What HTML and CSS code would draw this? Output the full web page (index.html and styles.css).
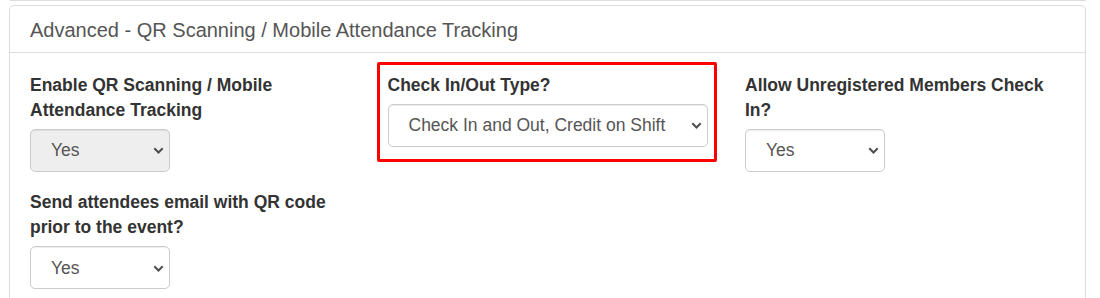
FILE: index.html
```html
<!DOCTYPE html>
<html lang="en">
<head>
  <meta charset="UTF-8" />
  <meta name="viewport" content="width=device-width, initial-scale=1.0"/>
  <title>Event Settings - Advanced</title>
  <link rel="stylesheet" href="styles.css">
</head>
<body>
  <div class="panel-group">
    <!-- bottom edge of the panel above -->
    <div class="panel-stub"></div>

    <div class="panel">
      <div class="panel-heading">
        <h4 class="panel-title">Advanced - QR Scanning / Mobile Attendance Tracking</h4>
      </div>
      <div class="panel-body">
        <div class="form-grid">
          <div class="form-group">
            <label for="qr-enabled">Enable QR Scanning / Mobile Attendance Tracking</label>
            <div class="select-wrap select-short">
              <select id="qr-enabled" class="form-control" disabled>
                <option>Yes</option>
                <option>No</option>
              </select>
              <svg class="caret" width="11" height="7" viewBox="0 0 11 7"><path d="M1.3 1.3l4.2 4.2 4.2-4.2"/></svg>
            </div>
          </div>

          <div class="form-group highlighted">
            <label for="check-type">Check In/Out Type?</label>
            <div class="select-wrap">
              <select id="check-type" class="form-control">
                <option>Check In and Out, Credit on Shift</option>
                <option>Check In Only</option>
              </select>
              <svg class="caret" width="11" height="7" viewBox="0 0 11 7"><path d="M1.3 1.3l4.2 4.2 4.2-4.2"/></svg>
            </div>
            <!-- annotation box -->
            <div class="callout"></div>
          </div>

          <div class="form-group">
            <label for="allow-unreg">Allow Unregistered Members Check In?</label>
            <div class="select-wrap select-short">
              <select id="allow-unreg" class="form-control">
                <option>Yes</option>
                <option>No</option>
              </select>
              <svg class="caret" width="11" height="7" viewBox="0 0 11 7"><path d="M1.3 1.3l4.2 4.2 4.2-4.2"/></svg>
            </div>
          </div>

          <div class="form-group">
            <label for="send-email">Send attendees email with QR code prior to the event?</label>
            <div class="select-wrap select-short">
              <select id="send-email" class="form-control">
                <option>Yes</option>
                <option>No</option>
              </select>
              <svg class="caret" width="11" height="7" viewBox="0 0 11 7"><path d="M1.3 1.3l4.2 4.2 4.2-4.2"/></svg>
            </div>
          </div>
        </div>
      </div>
    </div>
  </div>
</body>
</html>
```

FILE: styles.css
```css
/* Base */
body {
  font-family: "Liberation Sans", Arial, sans-serif;
  margin: 0;
  background-color: #fff;
  color: #333;
  overflow: hidden;
}
.panel-group {
  padding: 0 14px 0 9px;
}

/* Panels */
.panel-stub {
  height: 1px;
  border: 1px solid #ddd;
  border-top: none;
  border-radius: 0 0 5px 5px;
  margin-top: -1px;
}
.panel {
  margin-top: 4px;
  border: 1px solid #ddd;
  border-radius: 5px;
  background-color: #fff;
}
.panel-heading {
  padding: 13px 20px 11px;
  border-bottom: 1px solid #ddd;
}
.panel-title {
  margin: 0;
  font-size: 20px;
  font-weight: normal;
  line-height: 22px;
  color: #555;
}
.panel-body {
  padding: 20px;
}

/* Form layout */
.form-grid {
  display: grid;
  grid-template-columns: repeat(3, 1fr);
  column-gap: 37.5px;
  row-gap: 18.75px;
  align-items: start;
}
.form-group {
  display: flex;
  flex-direction: column;
  align-items: flex-start;
}
.form-group label {
  font-size: 17.5px;
  font-weight: bold;
  line-height: 25px;
  margin-bottom: 6px;
  color: #333;
}

/* Selects */
.select-wrap {
  position: relative;
  width: 100%;
}
.select-short {
  width: 140px;
}
.form-control {
  display: block;
  width: 100%;
  height: 42.5px;
  box-sizing: border-box;
  padding: 0 24px 0 20px;
  font-family: inherit;
  font-size: 17.5px;
  color: #555;
  background-color: #fff;
  border: 1px solid #ccc;
  border-radius: 5px;
  box-shadow: inset 0 1px 1px rgba(0, 0, 0, 0.075);
  appearance: none;
  -webkit-appearance: none;
}
.form-control:disabled {
  background-color: #eee;
  color: #555;
  opacity: 1;
}
.caret {
  position: absolute;
  right: 6px;
  top: 50%;
  margin-top: -3px;
  pointer-events: none;
}
.caret path {
  fill: none;
  stroke: #4d4d4d;
  stroke-width: 2;
}

/* Red annotation around the check in/out field */
.highlighted {
  position: relative;
}
.callout {
  position: absolute;
  top: -11.5px;
  left: -10.5px;
  width: 340px;
  height: 100px;
  box-sizing: border-box;
  border: 3.5px solid #f00;
  border-radius: 2px;
}
```
